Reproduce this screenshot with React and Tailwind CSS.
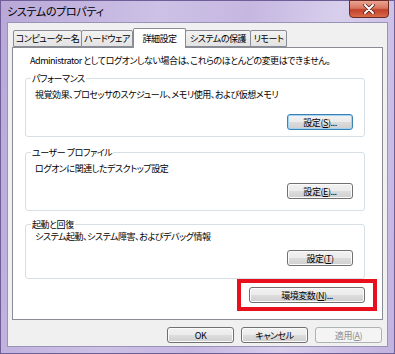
import React from 'react';

const jp = "font-['Noto_Sans_CJK_JP',sans-serif] [font-feature-settings:'palt']";
const txt = 'text-[9px] tracking-[-0.45px] whitespace-nowrap';

const Btn = ({ children, className = '', focused, disabled }) => (
  <div
    className={`flex items-center justify-center h-[16px] rounded-[3px] border leading-none ${txt}
      ${disabled
        ? 'border-[#adb2b5] bg-[#f4f4f4] text-[#8d8d8d]'
        : focused
          ? 'border-[#3c7fb1] bg-[linear-gradient(#f2f2f2_0%,#ebebeb_50%,#dddddd_50%,#cfcfcf_100%)] shadow-[inset_0_0_0_1px_#9fd5f3] text-black'
          : 'border-[#707070] bg-[linear-gradient(#f2f2f2_0%,#ebebeb_50%,#dddddd_50%,#cfcfcf_100%)] shadow-[inset_0_0_0_1px_#fbfbfb] text-black'}
      ${className}`}
  >
    {children}
  </div>
);

const Tab = ({ label, width, active }) => (
  <div
    className={`flex items-center justify-center border border-[#898c95] leading-none ${txt}
      ${active
        ? 'relative z-10 h-[20px] -mb-px border-b-0 bg-white rounded-t-[2px]'
        : 'h-[17px] -ml-px bg-[linear-gradient(#f2f2f2,#e3e3e3)] rounded-t-[2px]'}`}
    style={{ width }}
  >
    {label}
  </div>
);

const Group = ({ label, text, btn, h, descMt, btnMt, className = '', focused }) => (
  <div className={`ml-[12px] w-[340px] border border-[#d5dfe5] rounded-[3px] ${className}`} style={{ height: h }}>
    <div className={`ml-[5px] -mt-[6px] w-fit bg-white px-[1px] leading-[11px] ${txt}`}>{label}</div>
    <p className={`pl-[9px] leading-[12px] ${txt}`} style={{ marginTop: descMt }}>{text}</p>
    <div className="flex justify-end pr-[11px]" style={{ marginTop: btnMt }}>
      <Btn focused={focused} className="w-[66px]">{btn}</Btn>
    </div>
  </div>
);

const tabs = [
  { label: 'コンピューター名', width: 69 },
  { label: 'ハードウェア', width: 52 },
  { label: '詳細設定', width: 53, active: true },
  { label: 'システムの保護', width: 66 },
  { label: 'リモート', width: 37 },
];

export default function App() {
  return (
    <div className={`w-[395px] h-[354px] flex flex-col text-black border border-[#6f5f98] bg-[linear-gradient(100deg,#b9a8d8_0%,#cdc1e6_35%,#c6b7e1_55%,#d8cfec_75%,#c2b2df_100%)] ${jp}`}>
      {/* タイトルバー */}
      <div className="h-[21px] flex items-start justify-between pl-[6px] pr-[5px]">
        <span className="mt-[4px] text-[11px] leading-[13px] tracking-[-0.3px]">システムのプロパティ</span>
        <div className="w-[40px] h-[18px] -mt-px flex items-center justify-center rounded-b-[4px] border border-[#6b2b24] bg-[linear-gradient(#e9a493_0%,#d9765f_45%,#c2412a_55%,#d96b4a_100%)]">
          <svg width="12" height="10" viewBox="0 0 12 10">
            <path d="M2 1 L10 9 M10 1 L2 9" stroke="#4a1a14" strokeWidth="3.4" strokeLinecap="round" />
            <path d="M2 1 L10 9 M10 1 L2 9" stroke="#fff" strokeWidth="2" strokeLinecap="round" />
          </svg>
        </div>
      </div>

      {/* 本体 */}
      <div className="flex-1 mx-[6px] mb-[6px] flex flex-col bg-[#f0f0f0] border border-[#9a93b8]">
        <div className="h-[20px] mt-[4px] flex items-end pl-[6px]">
          {tabs.map((t) => (
            <Tab key={t.label} {...t} />
          ))}
        </div>

        <div className="mx-[4px] h-[273px] border border-[#898c95] bg-white">
          <p className={`mt-[7px] pl-[17px] leading-[12px] ${txt}`}>
            Administrator としてログオンしない場合は、これらのほとんどの変更はできません。
          </p>

          <Group
            className="mt-[11px]"
            label="パフォーマンス"
            text="視覚効果、プロセッサのスケジュール、メモリ使用、および仮想メモリ"
            btn={<span>設定(<u>S</u>)...</span>}
            h={59}
            descMt={5}
            btnMt={13}
            focused
          />
          <Group
            className="mt-[15px]"
            label="ユーザー プロファイル"
            text="ログオンに関連したデスクトップ設定"
            btn={<span>設定(<u>E</u>)...</span>}
            h={59}
            descMt={5}
            btnMt={8}
          />
          <Group
            className="mt-[13px]"
            label="起動と回復"
            text="システム起動、システム障害、およびデバッグ情報"
            btn={<span>設定(<u>T</u>)</span>}
            h={55}
            descMt={1}
            btnMt={7}
          />

          <div className="ml-[224px] w-[140px] h-[32px] flex items-center justify-center border-[4px] border-[#e8101c]">
            <Btn className="w-[116px]">
              <span>環境変数(<u>N</u>)...</span>
            </Btn>
          </div>
        </div>

        <div className="mt-[7px] flex justify-end gap-[7px] pr-[5px]">
          <Btn className="w-[67px]">OK</Btn>
          <Btn className="w-[67px]">キャンセル</Btn>
          <Btn className="w-[67px]" disabled>
            <span>適用(<u>A</u>)</span>
          </Btn>
        </div>
      </div>
    </div>
  );
}
